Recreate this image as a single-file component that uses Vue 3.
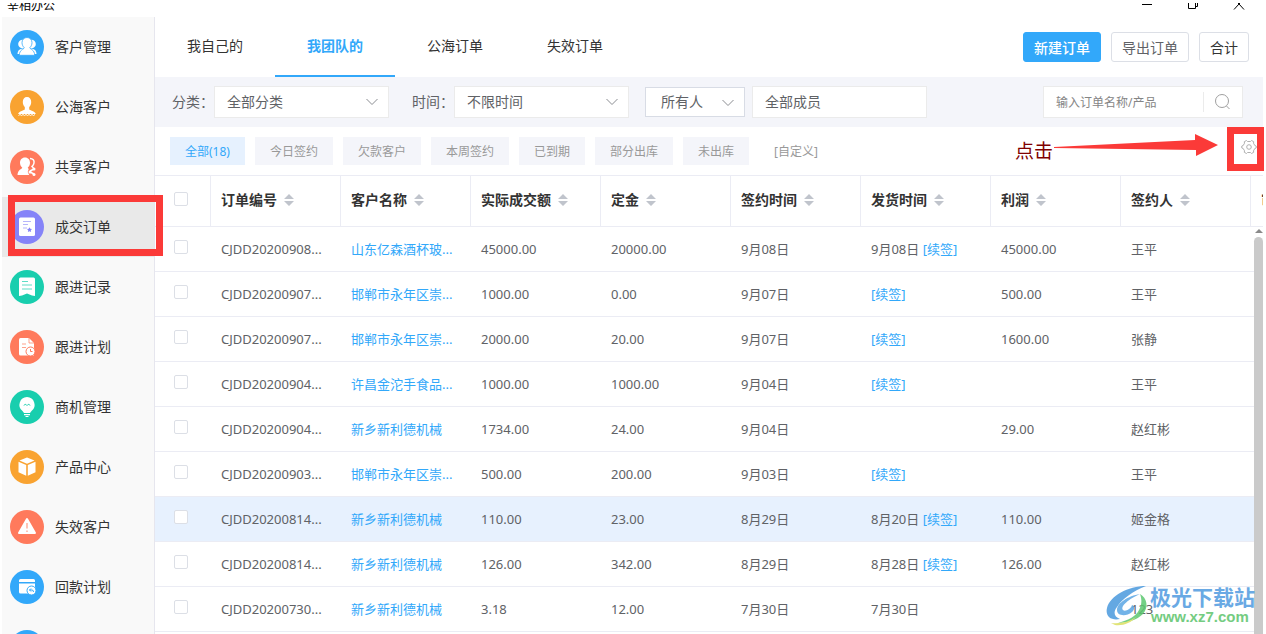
<template>
  <div class="window">
    <header class="title-bar">
      <span class="app-name">宰相办公</span>
      <div class="window-buttons">
        <button type="button" aria-label="最小化">
          <svg width="12" height="8" viewBox="0 0 12 8"><path d="M1 1.500h10" /></svg>
        </button>
        <button type="button" aria-label="还原">
          <svg width="12" height="8" viewBox="0 0 12 8"><path d="M1.500 0v5.500h7V0M8.500 3.500h2V0" /></svg>
        </button>
        <button type="button" aria-label="关闭">
          <svg width="12" height="8" viewBox="0 0 12 8"><path d="M1 6.500L6 1l5 5.500M5 0l1 1 1-1" /></svg>
        </button>
      </div>
    </header>

    <div class="body">
      <nav class="sidebar">
        <a
          v-for="item in menu"
          :key="item.name"
          href="#"
          class="menu-item"
          :class="{ active: item.name === activeMenu }"
          @click.prevent="activeMenu = item.name"
        >
          <svg class="menu-icon" viewBox="0 0 34 34">
            <circle cx="17" cy="17" r="17" :fill="item.color" />
            <g v-if="item.icon === 'group'" fill="#fff">
              <circle cx="12.500" cy="14" r="4.300" />
              <circle cx="21.500" cy="14" r="4.300" />
              <path d="M7.500 24c0-3 1.500-5 5-5.500h9c3.500.5 5 2.500 5 5.500z" />
              <path
                d="M17 7.500c3.200 0 5 2.300 5 5.200 0 2-1 4-2.300 5.100.5 1.500 4.800 1.700 5 7.500H9.300c.2-5.800 4.500-6 5-7.500-1.300-1.100-2.300-3.100-2.300-5.100 0-2.900 1.800-5.200 5-5.200z"
                :stroke="item.color"
                stroke-width=".8"
              />
            </g>
            <g v-else-if="item.icon === 'person'" fill="#fff">
              <path d="M17 7c2.700 0 4.200 2 4.200 5 0 2.500-1 4-2 5v2.200c0 1.200 6.300 2 6.600 4.800H8.200c.3-2.800 6.600-3.600 6.600-4.800V17c-1-1-2-2.500-2-5 0-3 1.500-5 4.200-5z" />
              <path d="M8.500 25.500l1.500-1 1.500 1 1.500-1 1.500 1 1.500-1 1.500 1 1.500-1 1.500 1 1.500-1 1.500 1 1.500-1" fill="none" stroke="#fff" />
            </g>
            <g v-else-if="item.icon === 'share'" fill="#fff">
              <path d="M15 7.500c3.200 0 5 2.300 5 5.200 0 2-1 4-2.300 5.100l1 1.200-1 3 1.500 3H7.500c.2-5.500 4.300-5.700 4.800-7.200-1.300-1.100-2.300-3.100-2.300-5.100 0-2.900 1.800-5.200 5-5.200z" />
              <path d="M20 8.500c3 0 4.500 2 4 4.500-.2 1.500-1 2.500-2 3.500l1.500 1.500M20 21l4-2M20 22l4 2" fill="none" stroke="#fff" stroke-width="1.500" />
              <circle cx="24" cy="19" r="1.500" />
              <circle cx="20" cy="22" r="1.500" />
              <circle cx="24" cy="24.500" r="1.500" />
            </g>
            <g v-else-if="item.icon === 'order'">
              <rect x="9" y="7.500" width="16" height="18.500" rx="1.500" fill="#fff" />
              <path d="M13 11.500h8M13 14.500h5M13 18h4" :stroke="item.color" stroke-opacity=".6" />
              <path d="M19.500 17.300l.8 1.500 1.700.2-1.200 1.200.3 1.800-1.600-.8-1.600.8.300-1.800L17 19l1.700-.2z" :fill="item.color" />
            </g>
            <g v-else-if="item.icon === 'record'">
              <path d="M10.500 7.500h13A1.500 1.500 0 0 1 25 9v17l-3-.5-5-2-5 2-3 .5V9a1.500 1.500 0 0 1 1.500-1.500z" fill="#fff" />
              <path d="M12 11.500h6M12 15h10M12 19h10" :stroke="item.color" stroke-opacity=".7" />
            </g>
            <g v-else-if="item.icon === 'plan'">
              <path d="M10.500 8H19l5 5v12.500H10.500A1.500 1.500 0 0 1 9 24V9.500A1.500 1.500 0 0 1 10.500 8z" fill="#fff" />
              <path d="M19 8v5h5M12 14h4M12 17.500h4" fill="none" :stroke="item.color" stroke-opacity=".7" />
              <circle cx="20.500" cy="21.500" r="4.500" fill="#fff" :stroke="item.color" />
              <path d="M20.500 19v2.500h2" fill="none" :stroke="item.color" />
            </g>
            <g v-else-if="item.icon === 'bulb'" fill="#fff">
              <path d="M17 7a7.800 7.800 0 0 1 4.500 14l-1.500 2h-6l-1.500-2A7.800 7.800 0 0 1 17 7z" />
              <path d="M14 24h6v1.200h-6zM15 26h4l-1 1h-2z" />
              <path d="M14 15.500c.5-1.500 2-1.500 3 0 1-1.500 2.500-1.500 3 0" fill="none" :stroke="item.color" />
            </g>
            <g v-else-if="item.icon === 'box'" fill="#fff">
              <path d="M17 7.500l7.500 3-7.500 3.300-7.500-3.300z" />
              <path d="M8.500 11.800l7.700 3.200v10.800l-7.700-3.600zM25.500 11.800L17.800 15v10.800l7.700-3.600z" />
            </g>
            <g v-else-if="item.icon === 'warning'">
              <path d="M17 9L25 23H9z" fill="#fff" stroke="#fff" stroke-width="2" stroke-linejoin="round" />
              <path d="M17 13v5.500M17 20.500v1.500" :stroke="item.color" stroke-width="1.500" stroke-opacity=".6" />
            </g>
            <g v-else>
              <path d="M10.500 9h13A1.500 1.500 0 0 1 25 10.500V12H9v-1.500A1.500 1.500 0 0 1 10.500 9zM9 13.500h16v10H10.500A1.500 1.500 0 0 1 9 22z" fill="#fff" />
              <circle cx="21.500" cy="20.500" r="4.500" fill="#fff" :stroke="item.color" />
              <path d="M21 18.500L19.500 20l1.500 1.500M19.500 20h2.500q1.500 0 1.500 2" fill="none" :stroke="item.color" />
            </g>
          </svg>
          <span>{{ item.name }}</span>
          <i v-if="item.name === '成交订单'" class="mark menu-mark"></i>
        </a>
      </nav>

      <main class="main">
        <div class="top">
          <div class="tabs">
            <button
              v-for="tab in tabs"
              :key="tab"
              type="button"
              class="tab"
              :class="{ active: tab === activeTab }"
              @click="activeTab = tab"
            >
              {{ tab }}
            </button>
          </div>
          <div class="actions">
            <button type="button" class="btn primary">新建订单</button>
            <button type="button" class="btn">导出订单</button>
            <button type="button" class="btn dark">合计</button>
          </div>
        </div>

        <div class="filters">
          <label for="category">分类：</label>
          <div class="select">
            <select id="category">
              <option>全部分类</option>
            </select>
            <svg width="12" height="8" viewBox="0 0 12 8"><path d="M.5 1L6 6.500 11.500 1" /></svg>
          </div>
          <label for="time" class="time-label">时间：</label>
          <div class="select">
            <select id="time">
              <option>不限时间</option>
            </select>
            <svg width="12" height="8" viewBox="0 0 12 8"><path d="M.5 1L6 6.500 11.500 1" /></svg>
          </div>
          <div class="select owner">
            <select aria-label="人员范围">
              <option>所有人</option>
            </select>
            <svg width="12" height="8" viewBox="0 0 12 8"><path d="M.5 1L6 6.500 11.500 1" /></svg>
          </div>
          <input v-model="member" class="member" type="text" aria-label="成员" />
          <form class="search" @submit.prevent>
            <input v-model="keyword" type="text" placeholder="输入订单名称/产品" aria-label="搜索订单" />
            <button type="submit" aria-label="搜索">
              <svg width="18" height="18" viewBox="0 0 18 18">
                <circle cx="8" cy="8" r="6.500" />
                <path d="M12.500 13l3 3" />
              </svg>
            </button>
          </form>
        </div>

        <div class="tags">
          <button
            v-for="tag in tags"
            :key="tag"
            type="button"
            class="tag"
            :class="{ active: tag === activeTag }"
            @click="activeTag = tag"
          >
            {{ tag }}
          </button>
          <button type="button" class="tag custom">[自定义]</button>

          <div class="hint">
            <span>点击</span>
            <svg width="166" height="26" viewBox="0 0 166 26">
              <path d="M1 15L142 8V2l23 11-22 11v-6L1 16z" fill="#fb3a38" />
            </svg>
          </div>
          <button type="button" class="setting" aria-label="设置">
            <svg width="16" height="16" viewBox="0 0 16 16">
              <path d="M5.500 1.500l1 1h3l1-1 2.200 1.200-.2 1.500 1.300 2.300 1.400.5v2l-1.400.5-1.300 2.300.2 1.500-2.200 1.200-1-1h-3l-1 1-2.200-1.200.2-1.500-1.300-2.300L.8 9V7l1.400-.5 1.300-2.300-.2-1.500z" />
              <circle cx="8" cy="8" r="2.300" />
            </svg>
            <i class="mark setting-mark"></i>
          </button>
        </div>

        <div class="table-wrap">
          <table>
            <colgroup>
              <col class="col-check" />
              <col v-for="col in columns" :key="col" class="col-data" />
              <col />
            </colgroup>
            <thead>
              <tr>
                <th class="check"><input type="checkbox" aria-label="全选" /></th>
                <th v-for="col in columns" :key="col">
                  {{ col }}
                  <svg class="sort" width="10" height="12" viewBox="0 0 10 12">
                    <path d="M5 0l5 5H0zM5 12L0 7h10z" />
                  </svg>
                </th>
                <th>审核</th>
              </tr>
            </thead>
            <tbody>
              <tr v-for="(row, index) in orders" :key="index" :class="{ current: index === 6 }">
                <td class="check"><input type="checkbox" :aria-label="'选择' + row.no" /></td>
                <td>{{ row.no }}</td>
                <td><a href="#" @click.prevent>{{ row.customer }}</a></td>
                <td>{{ row.amount }}</td>
                <td>{{ row.deposit }}</td>
                <td>{{ row.signed }}</td>
                <td>
                  {{ row.shipped }}
                  <a v-if="row.renew" href="#" @click.prevent>[续签]</a>
                </td>
                <td>{{ row.profit }}</td>
                <td>{{ row.signer }}</td>
                <td></td>
              </tr>
            </tbody>
          </table>

          <div class="scrollbar">
            <i class="scroll-arrow"></i>
            <i class="scroll-thumb"></i>
          </div>
        </div>
      </main>
    </div>

    <div class="watermark">
      <svg width="44" height="42" viewBox="0 0 44 42">
        <path d="M40 1C22 1 4 11 1 23c-2 8 4 13 13 11-6-2-7-7-3-12C16 14 27 6 40 1z" fill="#4a9ade" />
        <path d="M34 9C22 11 11 18 11 25c0 6 9 7 15 2 3-3 3-6 0-7-1 4-7 7-9 5-3-4 6-11 17-16z" fill="#5aa6e4" />
        <path d="M34 9c7 4 9 13 3 20-6 6-16 9-25 9 11-3 18-7 21-13 3-5 3-11 1-16z" fill="#5cc870" />
        <path d="M5 38c10 1 18-1 25-6-5 6-13 9-21 8z" fill="#dcdf60" />
      </svg>
      <div>
        <strong>极光下载站</strong>
        <span>www.xz7.com</span>
      </div>
    </div>
  </div>
</template>

<script setup>
import { ref } from 'vue';

const activeMenu = ref('成交订单');
const activeTab = ref('我团队的');
const activeTag = ref('全部(18)');
const member = ref('全部成员');
const keyword = ref('');

const menu = [
  { name: '客户管理', icon: 'group', color: '#32a8fa' },
  { name: '公海客户', icon: 'person', color: '#f9a331' },
  { name: '共享客户', icon: 'share', color: '#ff7a5c' },
  { name: '成交订单', icon: 'order', color: '#8583f8' },
  { name: '跟进记录', icon: 'record', color: '#19ceae' },
  { name: '跟进计划', icon: 'plan', color: '#ff7a5c' },
  { name: '商机管理', icon: 'bulb', color: '#19ceae' },
  { name: '产品中心', icon: 'box', color: '#f9a331' },
  { name: '失效客户', icon: 'warning', color: '#ff7a5c' },
  { name: '回款计划', icon: 'payment', color: '#32a8fa' },
  { name: '回款记录', icon: 'payment', color: '#32a8fa' },
];

const tabs = ['我自己的', '我团队的', '公海订单', '失效订单'];

const tags = ['全部(18)', '今日签约', '欠款客户', '本周签约', '已到期', '部分出库', '未出库'];

const columns = ['订单编号', '客户名称', '实际成交额', '定金', '签约时间', '发货时间', '利润', '签约人'];

const orders = [
  { no: 'CJDD20200908...', customer: '山东亿森酒杯玻...', amount: '45000.00', deposit: '20000.00', signed: '9月08日', shipped: '9月08日', renew: true, profit: '45000.00', signer: '王平' },
  { no: 'CJDD20200907...', customer: '邯郸市永年区崇...', amount: '1000.00', deposit: '0.00', signed: '9月07日', shipped: '', renew: true, profit: '500.00', signer: '王平' },
  { no: 'CJDD20200907...', customer: '邯郸市永年区崇...', amount: '2000.00', deposit: '20.00', signed: '9月07日', shipped: '', renew: true, profit: '1600.00', signer: '张静' },
  { no: 'CJDD20200904...', customer: '许昌金沱手食品...', amount: '1000.00', deposit: '1000.00', signed: '9月04日', shipped: '', renew: true, profit: '', signer: '王平' },
  { no: 'CJDD20200904...', customer: '新乡新利德机械', amount: '1734.00', deposit: '24.00', signed: '9月04日', shipped: '', renew: false, profit: '29.00', signer: '赵红彬' },
  { no: 'CJDD20200903...', customer: '邯郸市永年区崇...', amount: '500.00', deposit: '200.00', signed: '9月03日', shipped: '', renew: true, profit: '', signer: '王平' },
  { no: 'CJDD20200814...', customer: '新乡新利德机械', amount: '110.00', deposit: '23.00', signed: '8月29日', shipped: '8月20日', renew: true, profit: '110.00', signer: '姬金格' },
  { no: 'CJDD20200814...', customer: '新乡新利德机械', amount: '126.00', deposit: '342.00', signed: '8月29日', shipped: '8月28日', renew: true, profit: '126.00', signer: '赵红彬' },
  { no: 'CJDD20200730...', customer: '新乡新利德机械', amount: '3.18', deposit: '12.00', signed: '7月30日', shipped: '7月30日', renew: false, profit: '', signer: '123' },
];
</script>

<style>
body {
  margin: 0;
  background: #fff;
}
</style>

<style scoped>
* {
  box-sizing: border-box;
}

.window {
  position: relative;
  display: flex;
  flex-direction: column;
  height: 100vh;
  padding: 3px 3px 0 2px;
  overflow: hidden;
  font-family: "Noto Sans", "Noto Sans CJK SC", sans-serif;
  font-size: 14px;
  color: #333;
}

button,
input,
select {
  font-family: inherit;
  color: inherit;
}

button {
  padding: 0;
  border: none;
  background: none;
  cursor: pointer;
}

a {
  color: #32a8fa;
  text-decoration: none;
}

.title-bar {
  display: flex;
  flex: none;
  justify-content: space-between;
  align-items: flex-end;
  height: 14px;
  padding: 0 18px 4px 5px;
  overflow: hidden;
}

.app-name {
  font-size: 12px;
  line-height: 14px;
  color: #000;
}

.window-buttons {
  display: flex;
  align-self: flex-start;
  gap: 34px;
}

.window-buttons button {
  display: flex;
  width: 12px;
}

.window-buttons svg {
  fill: none;
  stroke: #000;
}

.body {
  display: flex;
  flex: 1;
  min-height: 0;
}

.sidebar {
  flex: none;
  width: 153px;
  background: #f9f9f9;
  border-right: 1px solid #e6e6ee;
}

.menu-item {
  position: relative;
  display: flex;
  align-items: center;
  gap: 11px;
  height: 60px;
  padding-left: 8px;
  color: #333;
}

.menu-item span {
  padding-bottom: 2px;
}

.menu-item.active {
  background: #e9e9e9;
}

.menu-icon {
  width: 34px;
  height: 34px;
}

/* red frames around the highlighted spots */
.mark {
  position: absolute;
  z-index: 2;
  border: 7px solid #fb3a38;
  pointer-events: none;
}

.menu-mark {
  top: -2px;
  right: -9px;
  bottom: 1px;
  left: 6px;
}

.main {
  display: flex;
  flex: 1;
  flex-direction: column;
  min-width: 0;
}

.top {
  display: flex;
  justify-content: space-between;
  height: 60px;
  padding-right: 14px;
}

.tabs {
  display: flex;
}

.tab {
  width: 120px;
  padding-bottom: 2px;
  border-bottom: 2px solid transparent;
  font-size: 14px;
}

.tab.active {
  border-bottom-color: #32a8fa;
  color: #32a8fa;
  font-weight: bold;
}

.actions {
  display: flex;
  align-items: center;
  gap: 10px;
}

.btn {
  height: 30px;
  padding: 0 10px;
  border: 1px solid #dcdfe6;
  border-radius: 3px;
  background: #fff;
  color: #606266;
  font-size: 14px;
}

.btn.primary {
  border-color: #32a8fa;
  background: #32a8fa;
  color: #fff;
  font-weight: 500;
}

.btn.dark {
  color: #333;
}

.filters {
  display: flex;
  align-items: center;
  height: 50px;
  padding: 0 20px 0 17px;
  background: #f4f5fa;
  color: #606266;
}

.filters label {
  width: 42px;
  padding-bottom: 2px;
  white-space: nowrap;
}

.filters .time-label {
  margin-left: 23px;
}

.select {
  position: relative;
  width: 175px;
}

.select select {
  display: block;
  width: 100%;
  height: 32px;
  padding: 0 12px 2px;
  border: 1px solid #ebebeb;
  border-radius: 0;
  background: #fff;
  appearance: none;
  font-size: 14px;
}

.select svg {
  position: absolute;
  top: 12px;
  right: 11px;
  fill: none;
  stroke: #8a8c91;
  pointer-events: none;
}

.select.owner {
  width: 100px;
  margin: 0 7px 0 16px;
}

.select.owner select {
  height: 30px;
  padding: 0 15px 2px;
  border-color: #d8dce5;
}

.member {
  width: 175px;
  height: 32px;
  padding: 0 12px 2px;
  border: 1px solid #ebebeb;
  font-size: 14px;
}

.search {
  display: flex;
  align-items: center;
  width: 200px;
  height: 32px;
  margin-left: auto;
  border: 1px solid #ebebeb;
  background: #fff;
}

.search input {
  flex: 1;
  min-width: 0;
  padding: 0 12px;
  border: none;
  outline: none;
  font-size: 12px;
}

.search input::placeholder {
  color: #858585;
}

.search button {
  display: flex;
  align-items: center;
  justify-content: center;
  width: 39px;
  height: 20px;
  border-left: 1px solid #ebebeb;
}

.search svg {
  fill: none;
  stroke: #a0a0a0;
}

.tags {
  position: relative;
  display: flex;
  align-items: center;
  gap: 10px;
  height: 48px;
  padding: 0 8px 0 15px;
}

.tag {
  height: 28px;
  padding: 0 15px;
  background: #f4f5fa;
  color: #999;
  font-size: 12px;
  white-space: nowrap;
}

.tag.active {
  background: #e6f1fe;
  color: #32a8fa;
}

.tag.custom {
  background: none;
}

.hint {
  display: flex;
  align-items: center;
  margin-left: auto;
  color: #800000;
  font-size: 19px;
}

.hint span {
  padding-bottom: 3px;
}

.hint svg {
  margin-bottom: 12px;
}

.setting {
  position: relative;
  display: flex;
  margin: 0 -2px 8px 12px;
}

.setting svg {
  fill: none;
  stroke: #b0b0b0;
}

.setting-mark {
  top: -12px;
  right: -7px;
  bottom: -16px;
  left: -14px;
}

.table-wrap {
  position: relative;
  flex: 1;
  min-height: 0;
  overflow: hidden;
}

table {
  width: 100%;
  table-layout: fixed;
  border-collapse: separate;
  border-spacing: 0;
}

.col-check {
  width: 56px;
}

.col-data {
  width: 130px;
}

th,
td {
  padding: 0 0 0 10px;
  border-bottom: 1px solid #ebecf4;
  line-height: 20px;
  text-align: left;
  white-space: nowrap;
  overflow: hidden;
}

th {
  height: 52px;
  padding-bottom: 3px;
  border-top: 1px solid #ebecf4;
  border-right: 1px solid #ebecf4;
  color: #333;
  font-size: 14px;
}

th:last-child {
  border-right: none;
}

td {
  height: 45px;
  padding-bottom: 1px;
  color: #606266;
  font-size: 13px;
}

.current td {
  background: #e7f1fe;
}

.check {
  padding: 0 0 4px 19px;
}

.check input {
  display: block;
  width: 14px;
  height: 14px;
  margin: 0;
  border: 1px solid #dcdfe6;
  border-radius: 2px;
  background: #fff;
  appearance: none;
}

.check input:checked {
  background: #32a8fa;
}

.sort {
  margin-left: 3px;
  fill: #c0c4cc;
  vertical-align: -1px;
}

.scrollbar {
  position: absolute;
  top: 52px;
  right: 0;
  bottom: 0;
  display: flex;
  flex-direction: column;
  align-items: center;
  gap: 4px;
  width: 9px;
  padding-top: 2px;
  background: #fff;
}

.scroll-arrow {
  border: 4px solid transparent;
  border-top: none;
  border-bottom-color: #8a8a8a;
}

.scroll-thumb {
  flex: 1;
  width: 9px;
  border-radius: 5px 5px 0 0;
  background: #cacaca;
}

.watermark {
  position: absolute;
  right: 11px;
  bottom: 7px;
  display: flex;
  align-items: center;
  opacity: 0.85;
  pointer-events: none;
}

.watermark div {
  display: flex;
  flex-direction: column;
}

.watermark strong {
  color: #4f9be0;
  font-size: 21px;
  line-height: 22px;
}

.watermark span {
  padding-left: 1px;
  color: #5cc46c;
  font-family: "Liberation Sans", Arial, sans-serif;
  font-size: 15px;
  font-weight: bold;
  line-height: 18px;
}
</style>
